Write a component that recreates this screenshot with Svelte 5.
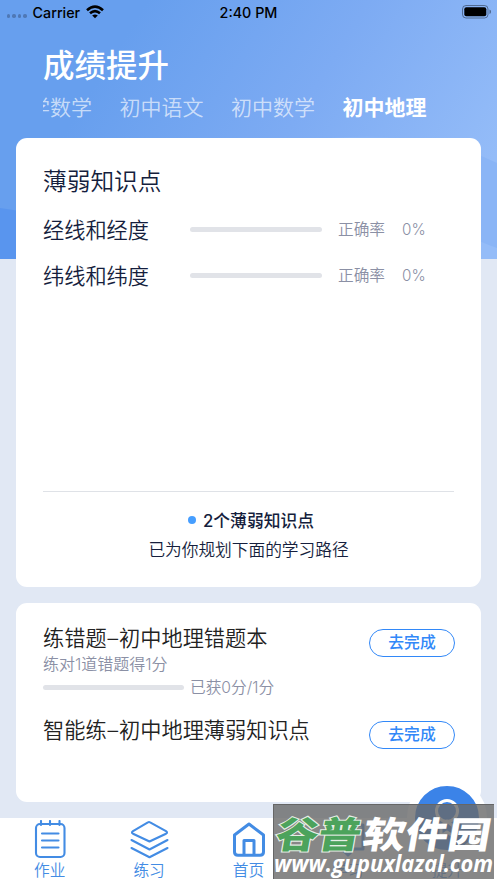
<script lang="ts">
	const subjects = ['初中语文', '初中数学', '初中地理'];
	let activeSubject = $state('初中地理');

	const points = [
		{ name: '经线和经度', rate: 0 },
		{ name: '纬线和纬度', rate: 0 }
	];
</script>

<div class="screen">
	<svg class="backdrop" viewBox="0 0 497 259" preserveAspectRatio="none">
		<defs>
			<linearGradient id="sky" gradientUnits="userSpaceOnUse" x1="110" y1="60" x2="430" y2="260">
				<stop offset="0" stop-color="#679fee" />
				<stop offset="0.5" stop-color="#7dabf3" />
				<stop offset="1" stop-color="#94bcf8" />
			</linearGradient>
		</defs>
		<rect width="497" height="259" fill="url(#sky)" />
		<path d="M0 208 Q90 220 150 259 H0Z" fill="#5995ee" />
		<path d="M330 138 Q430 130 497 163 V248 Q430 225 330 138Z" fill="#8ab5f6" />
	</svg>

	<div class="status">
		<div class="carrier">
			<span class="dots"><i></i><i></i><i></i><i></i></span>
			<span>Carrier</span>
			<svg width="18" height="14" viewBox="0 0 18 14" fill="none" stroke="#000" stroke-width="2.6">
				<path d="M1 5.2 Q9 -2 17 5.2" />
				<path d="M4 8.3 Q9 3.9 14 8.3" />
				<path d="M9 13.2 L6.2 10.5 Q9 8.3 11.8 10.5Z" fill="#000" stroke="none" />
			</svg>
		</div>
		<span class="time">2:40 PM</span>
		<svg class="battery" width="30" height="14" viewBox="0 0 30 14">
			<rect x="0.5" y="0.5" width="25.5" height="12.5" rx="3.5" fill="none" stroke="#000" stroke-opacity="0.4" />
			<rect x="2.3" y="2.3" width="22" height="9" rx="2" />
			<path d="M27.5 4.5 Q29 5 29 6.8 Q29 8.5 27.5 9Z" fill-opacity="0.45" />
		</svg>
	</div>

	<header>
		<h1>成绩提升</h1>
		<nav class="subjects">
			<button class="clipped">小学数学</button>
			{#each subjects as subject}
				<button class:active={subject === activeSubject} onclick={() => (activeSubject = subject)}>{subject}</button>
			{/each}
		</nav>
	</header>

	<section class="card weak">
		<h2>薄弱知识点</h2>
		{#each points as point}
			<div class="point">
				<span class="name">{point.name}</span>
				<div class="bar"><div class="fill" style="width: {point.rate}%"></div></div>
				<span class="label">正确率</span>
				<span class="rate">{point.rate}%</span>
			</div>
		{/each}
		<div class="summary">
			<p class="count"><i></i>2个薄弱知识点</p>
			<p class="plan">已为你规划下面的学习路径</p>
		</div>
	</section>

	<section class="card tasks">
		<div class="task first">
			<div>
				<h3>练错题<span class="dash">–</span>初中地理错题本</h3>
				<p>练对1道错题得1分</p>
				<div class="progress"><div class="bar"></div><span>已获0分/1分</span></div>
			</div>
			<button>去完成</button>
		</div>
		<div class="task">
			<h3>智能练<span class="dash">–</span>初中地理薄弱知识点</h3>
			<button>去完成</button>
		</div>
	</section>

	<footer>
		<div class="tab">
			<svg width="40" height="40" viewBox="0 0 40 40">
				<rect x="6" y="4" width="28.5" height="33" rx="4" />
				<path d="M11 1v4M20 1v4M29.5 1v4M12 13.5h16.5M12 20.5h16.5M12 27.5h16.5" />
			</svg>
			<span>作业</span>
		</div>
		<div class="tab">
			<svg width="40" height="40" viewBox="0 0 40 40">
				<path d="M18.9 2.4 Q20 1.6 21.1 2.4 L37 11.2 Q39 12.5 37 13.7 L20.5 21.5 L4 13.7 Q2 12.5 4 11.2Z M2.5 20 L20.5 29.5 L38.5 20 M2.5 28 L20.5 37.2 L38.5 28" />
			</svg>
			<span>练习</span>
		</div>
		<div class="tab">
			<svg class="home" width="40" height="40" viewBox="0 0 40 40">
				<path d="M5.5 15 L20 4 L34.5 15 V32 Q34.5 35.3 31 35.3 H9 Q5.5 35.3 5.5 32Z M15 35V20.5H25V35" />
			</svg>
			<span>首页</span>
		</div>
		<div class="tab">
			<svg class="home" width="40" height="40" viewBox="0 0 40 40">
				<path d="M5 5h30v24H26l-6 6-6-6H5z" />
			</svg>
			<span>学习</span>
		</div>
		<div class="tab promote">
			<div class="bubble">
				<svg width="64" height="64" viewBox="0 0 64 64">
					<circle cx="32" cy="25" r="10.5" />
					<path d="M26 40 L32 35 L38 40 V50 L32 46 L26 50Z" />
				</svg>
			</div>
			<span>提升</span>
		</div>
	</footer>

	<div class="watermark">
		<svg viewBox="0 0 221 75" width="221" height="75">
			<g class="brand" transform="translate(5 44) skewX(-10) scale(1 0.86)">
				<text class="green" x="-4" y="0">谷普</text>
				<text x="83" y="0">软件园</text>
			</g>
			<text class="url" x="1" y="68" textLength="219" lengthAdjust="spacingAndGlyphs">www.gupuxlazal.com</text>
		</svg>
	</div>
</div>

<style>
	:global(body) {
		margin: 0;
	}

	.screen {
		position: relative;
		display: flex;
		flex-direction: column;
		width: 497px;
		height: 883px;
		overflow: hidden;
		background: #e1e8f4;
		font-family: Inter, 'Noto Sans CJK SC', sans-serif;
		font-weight: 350;
		color: #151e3d;
	}

	h1, h2, h3, p {
		margin: 0;
		font-weight: 350;
	}

	button {
		font: inherit;
		padding: 0;
		border: 0;
		background: none;
	}

	.backdrop {
		position: absolute;
		top: 0;
		left: 0;
		width: 497px;
		height: 259px;
	}

	.status {
		position: relative;
		display: grid;
		flex: none;
		grid-template-columns: 1fr auto 1fr;
		align-items: center;
		height: 24px;
		padding: 0 5px 0 7px;
		font-size: 14.3px;
		font-weight: 500;
		color: #000;
	}

	.carrier {
		display: flex;
		align-items: center;
		gap: 6px;
	}

	.time {
		margin-right: 2px;
	}

	.dots {
		display: flex;
		gap: 2px;
		padding-top: 8px;
	}

	.dots i {
		width: 3.4px;
		height: 3.4px;
		border-radius: 50%;
		background: #4f78b5;
	}

	.battery {
		justify-self: end;
	}

	header {
		position: relative;
		flex: none;
		box-sizing: border-box;
		height: 114px;
		padding: 0 43px;
		color: #fff;
	}

	h1 {
		padding-top: 19px;
		font-size: 31.5px;
		font-weight: 500;
		line-height: 46px;
	}

	.subjects {
		display: flex;
		gap: 27.5px;
		overflow: hidden;
		margin-top: 4px;
	}

	.subjects button {
		flex: none;
		font-size: 21px;
		line-height: 30px;
		color: rgba(255, 255, 255, 0.65);
	}

	.subjects .clipped {
		margin-left: -35px;
	}

	.subjects .active {
		font-weight: 700;
		color: #fff;
	}

	.card {
		position: relative;
		flex: none;
		box-sizing: border-box;
		width: 465px;
		margin-left: 16px;
		border-radius: 11px;
		background: #fff;
	}

	.weak {
		display: flex;
		flex-direction: column;
		height: 449px;
		padding: 27px 27px 0;
	}

	h2 {
		height: 41px;
		font-size: 23.7px;
		line-height: 34px;
	}

	.point {
		display: flex;
		align-items: center;
		height: 46px;
		color: #8b90a5;
	}

	.name {
		width: 147px;
		padding-bottom: 2px;
		font-size: 21.2px;
		color: #151e3d;
	}

	.bar {
		height: 5px;
		border-radius: 3px;
		background: #e1e3e8;
	}

	.point .bar {
		width: 132px;
	}

	.fill {
		height: 100%;
		border-radius: 3px;
		background: #3f9cff;
	}

	.label {
		margin: 0 17px 0 16px;
		padding-bottom: 2px;
		font-size: 15.7px;
	}

	.rate {
		font-size: 15.2px;
	}

	.summary {
		margin-top: auto;
		height: 95px;
		border-top: 1px solid #dfe2e7;
		text-align: center;
	}

	.count {
		display: flex;
		align-items: center;
		justify-content: center;
		gap: 7px;
		height: 28px;
		padding: 14px 0 1px 5px;
		font-size: 16.8px;
		font-weight: 500;
	}

	.count i {
		width: 8px;
		height: 8px;
		border-radius: 50%;
		background: #469eff;
	}

	.plan {
		font-size: 16.7px;
		line-height: 30px;
	}

	.tasks {
		height: 199px;
		margin-top: 16px;
		padding: 21px 26px 0 27px;
	}

	.task {
		display: flex;
		justify-content: space-between;
		align-items: flex-start;
		color: #222;
	}

	.first {
		height: 92px;
	}

	h3 {
		font-size: 21.2px;
		line-height: 29px;
	}

	.dash {
		display: inline-block;
		width: 12.5px;
		text-align: center;
	}

	.task p,
	.progress {
		font-size: 15.7px;
		line-height: 23px;
		color: #8b90a5;
	}

	.task p {
		font-size: 16px;
	}

	.progress {
		display: flex;
		align-items: center;
		gap: 6px;
	}

	.progress .bar {
		width: 141px;
	}

	.task button {
		box-sizing: border-box;
		width: 86px;
		height: 28px;
		margin-top: 5px;
		border: 1.5px solid #3288f8;
		border-radius: 14px;
		font-size: 15.8px;
		line-height: 26px;
		font-weight: 500;
		color: #3288f8;
	}

	footer {
		position: relative;
		display: flex;
		flex: 1;
		margin-top: 16px;
		background: #fff;
	}

	.tab {
		display: flex;
		flex: 1;
		flex-direction: column;
		align-items: center;
		padding-top: 2px;
		font-size: 15.7px;
		line-height: 22px;
		color: #438ce4;
	}

	.tab svg {
		fill: none;
		stroke: #438ce4;
		stroke-width: 2.1;
		stroke-linecap: round;
		stroke-linejoin: round;
	}

	.tab .home {
		stroke-width: 3;
	}

	.promote {
		padding-top: 0;
	}

	.bubble {
		width: 64px;
		height: 64px;
		margin: -40px 0 2px;
		border: 8px solid #fff;
		border-radius: 50%;
		background: #3b83e8;
	}

	.bubble svg {
		stroke: #fff;
		stroke-width: 3;
	}

	.watermark {
		position: absolute;
		left: 273px;
		top: 804px;
		width: 221px;
		height: 75px;
		background: rgba(105, 105, 105, 0.8);
		box-shadow: inset 0 1px #666, inset 1px 0 #666;
	}

	.watermark svg {
		display: block;
		overflow: visible;
	}

	.brand {
		font: 900 42.5px 'Noto Sans CJK SC', sans-serif;
		fill: #fff;
	}

	.green {
		fill: #4ca35c;
		stroke: #e6efe6;
		stroke-width: 2.5;
		paint-order: stroke;
	}

	.url {
		font: italic 700 22.5px 'Open Sans', sans-serif;
		fill: #fff;
	}
</style>
